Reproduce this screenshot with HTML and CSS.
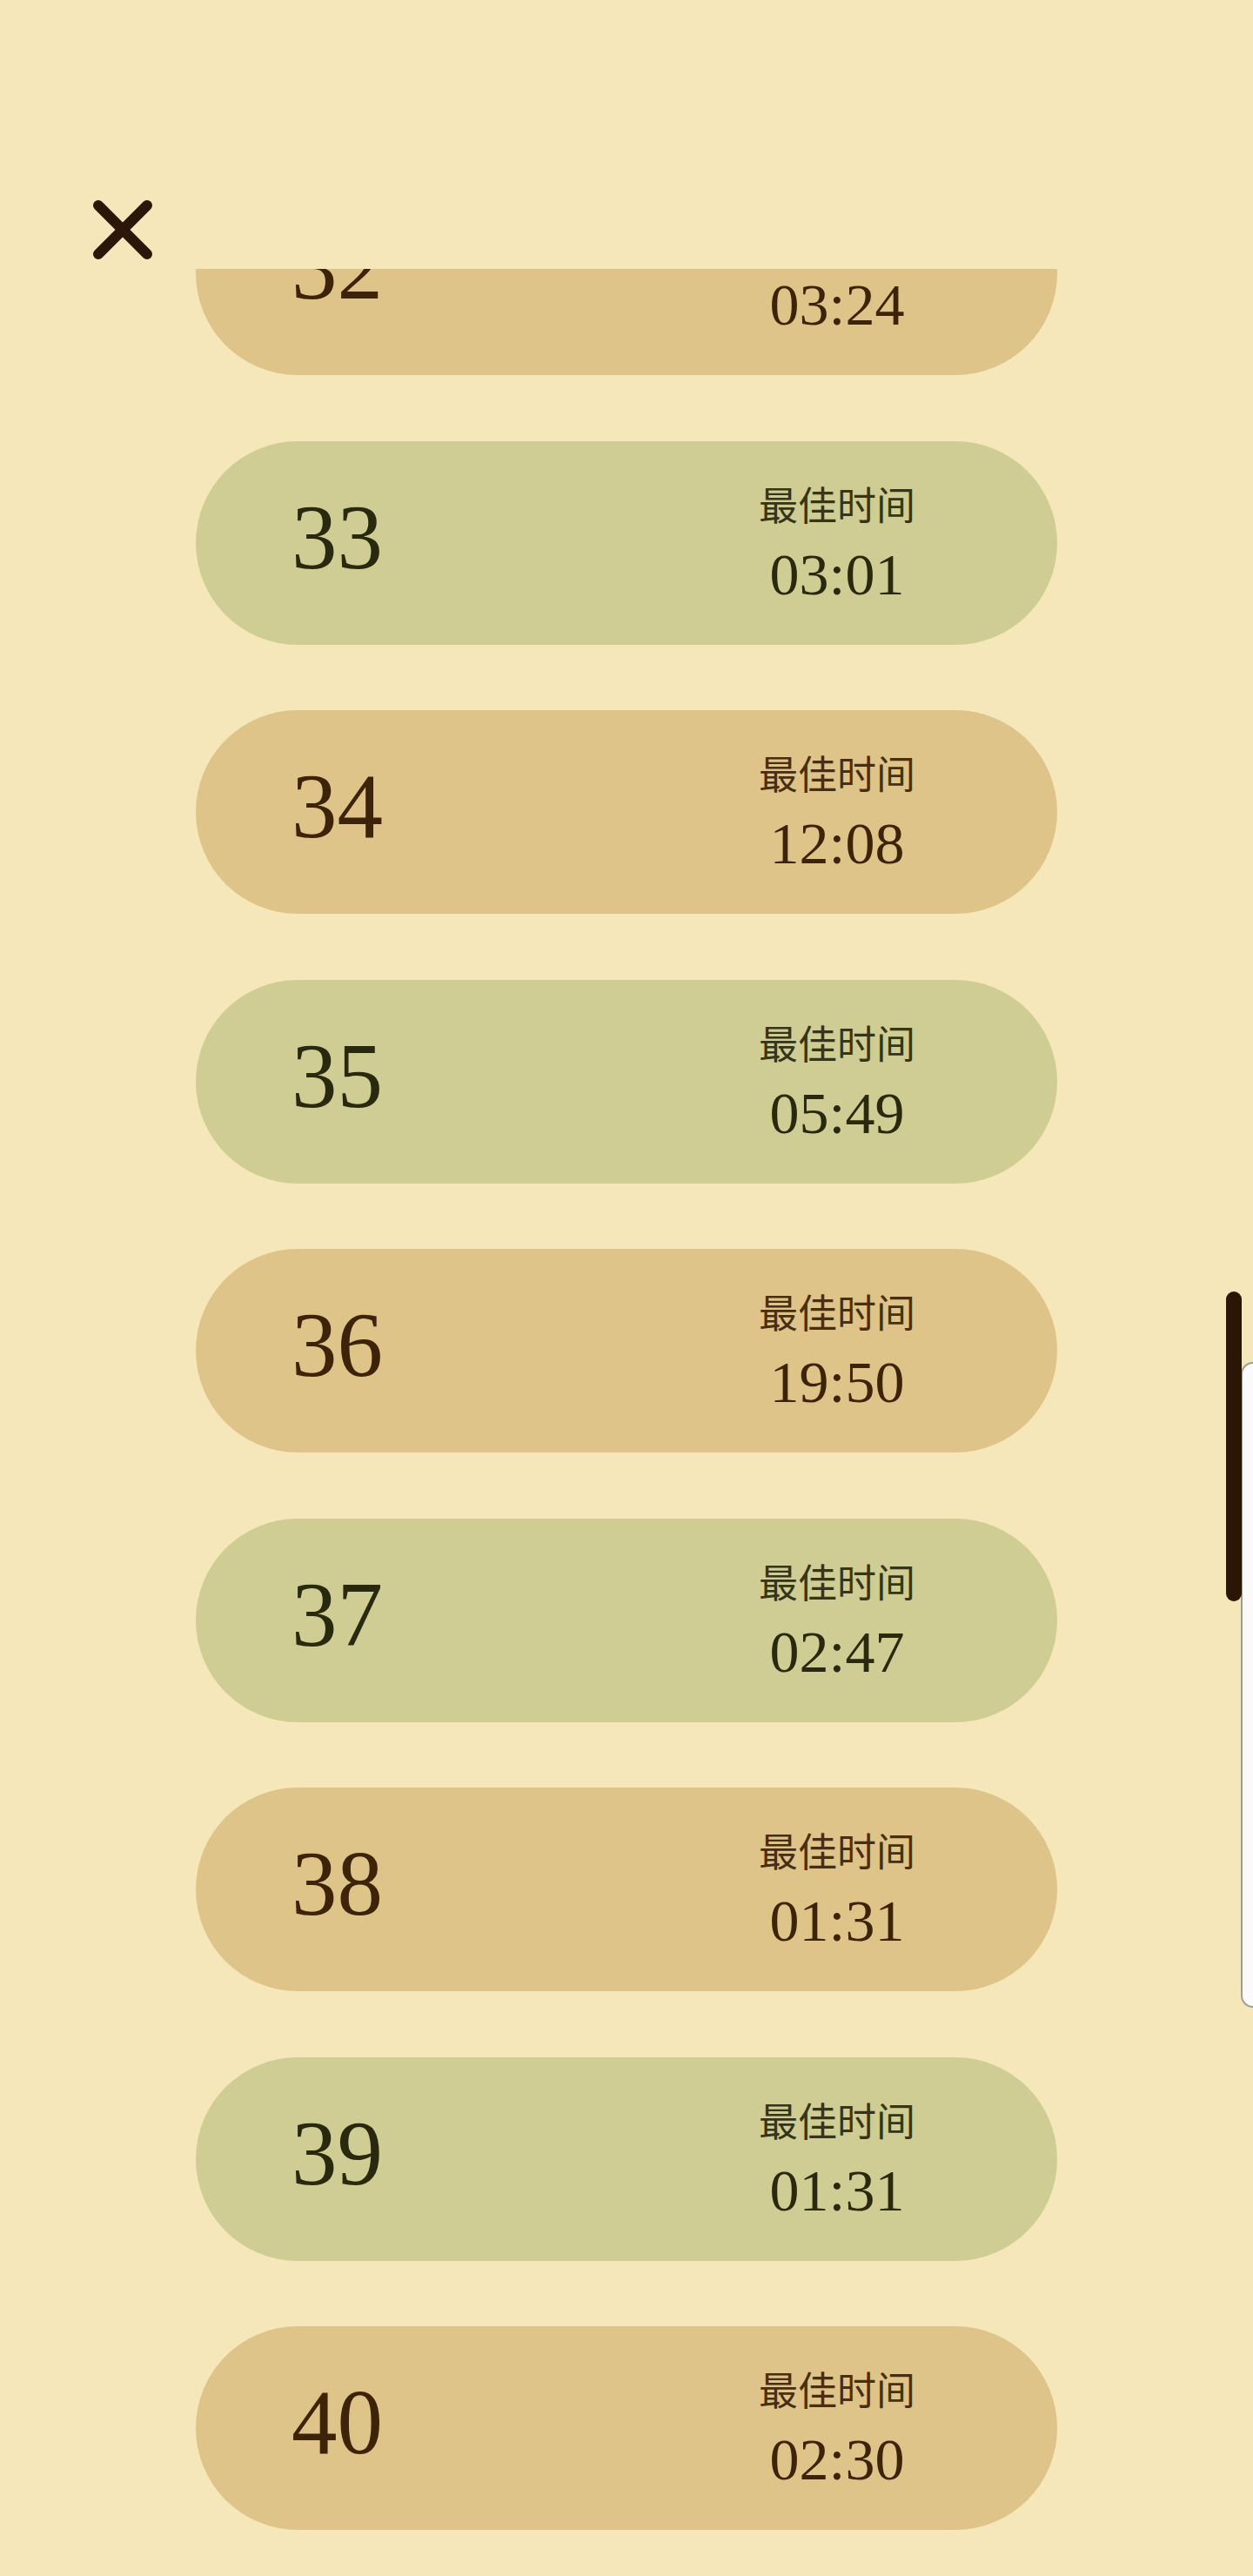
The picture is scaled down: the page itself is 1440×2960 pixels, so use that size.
FILE: index.html
```html
<!DOCTYPE html>
<html lang="zh">
<head>
<meta charset="utf-8">
<title>最佳时间</title>
<link rel="stylesheet" href="styles.css">
</head>
<body>
<div class="screen">
  <header class="top">
    <button class="close" aria-label="关闭">
      <svg width="70" height="70" viewBox="0 0 70 70"><path d="M7 7 L63 63 M63 7 L7 63" stroke="#2b1608" stroke-width="12" stroke-linecap="round" fill="none"/></svg>
    </button>
  </header>
  <main class="viewport">
    <ul class="levels">
      <li class="level tan"><span class="num">32</span><div class="best"><span class="label">最佳时间</span><span class="time">03:24</span></div></li>
      <li class="level green"><span class="num">33</span><div class="best"><span class="label">最佳时间</span><span class="time">03:01</span></div></li>
      <li class="level tan"><span class="num">34</span><div class="best"><span class="label">最佳时间</span><span class="time">12:08</span></div></li>
      <li class="level green"><span class="num">35</span><div class="best"><span class="label">最佳时间</span><span class="time">05:49</span></div></li>
      <li class="level tan"><span class="num">36</span><div class="best"><span class="label">最佳时间</span><span class="time">19:50</span></div></li>
      <li class="level green"><span class="num">37</span><div class="best"><span class="label">最佳时间</span><span class="time">02:47</span></div></li>
      <li class="level tan"><span class="num">38</span><div class="best"><span class="label">最佳时间</span><span class="time">01:31</span></div></li>
      <li class="level green"><span class="num">39</span><div class="best"><span class="label">最佳时间</span><span class="time">01:31</span></div></li>
      <li class="level tan"><span class="num">40</span><div class="best"><span class="label">最佳时间</span><span class="time">02:30</span></div></li>
    </ul>
  </main>
  <div class="edge-panel"></div>
  <div class="scroll-thumb"></div>
</div>
</body>
</html>
```

FILE: styles.css
```css
* { box-sizing: border-box; }
html, body {
  margin: 0;
  padding: 0;
  background: #f5e7b9;
}
body {
  font-family: "Liberation Serif", "Noto Sans CJK SC", serif;
}
.screen {
  position: relative;
  width: 1440px;
  height: 2960px;
  overflow: hidden;
  display: flex;
  flex-direction: column;
}
.top {
  height: 309px;
  flex: none;
  padding: 229px 0 0 106px;
}
.close {
  display: block;
  width: 70px;
  height: 70px;
  padding: 0;
  margin: 0;
  border: 0;
  background: none;
}
.close svg { display: block; }
.viewport {
  flex: 1;
  overflow: hidden;
}
.levels {
  list-style: none;
  margin: -112px 0 0 0;
  padding: 0 0 0 225px;
  display: flex;
  flex-direction: column;
  gap: 75.5px;
}
.level {
  width: 990px;
  height: 234px;
  border-radius: 117px;
  display: flex;
  align-items: center;
  justify-content: space-between;
  padding: 0 133px 0 110px;
}
.level.tan { background: #dfc489; color: #3d2308; }
.level.green { background: #cfcd93; color: #29290f; }
.num {
  font-family: "Liberation Serif", serif;
  font-size: 105px;
  line-height: 104px;
  margin-bottom: 12px;
}
.best {
  width: 240px;
  display: flex;
  flex-direction: column;
  align-items: center;
  gap: 22px;
}
.label {
  font-family: "Noto Sans CJK SC", sans-serif;
  font-size: 45px;
  line-height: 50px;
  opacity: 0.92;
}
.time {
  font-family: "Liberation Serif", serif;
  font-size: 68px;
  line-height: 68px;
}
.edge-panel {
  position: absolute;
  left: 1426px;
  top: 1565px;
  width: 30px;
  height: 742px;
  background: #fafafa;
  border: 2px solid #a09d8c;
  border-radius: 14px 0 0 14px;
}
.scroll-thumb {
  position: absolute;
  left: 1409px;
  top: 1484px;
  width: 18px;
  height: 356px;
  border-radius: 9px;
  background: #2b1505;
}
```
